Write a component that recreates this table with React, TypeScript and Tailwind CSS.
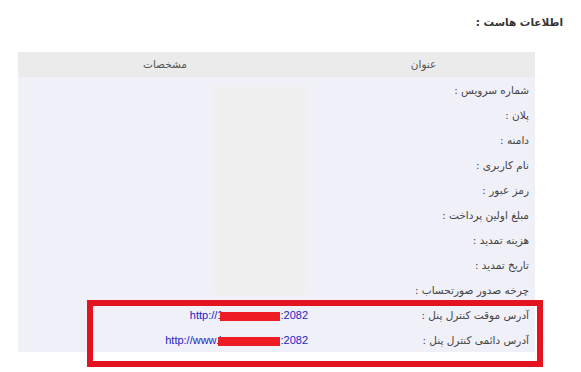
import React from "react";

const labels = [
  "شماره سرویس :",
  "پلان :",
  "دامنه :",
  "نام کاربری :",
  "رمز عبور :",
  "مبلغ اولین پرداخت :",
  "هزینه تمدید :",
  "تاریخ تمدید :",
  "چرخه صدور صورتحساب :",
  "آدرس موقت کنترل پنل :",
  "آدرس دائمی کنترل پنل :",
];

function Link({ prefix, bar }: { prefix: string; bar: number }) {
  return (
    <span dir="ltr" className="text-[#2323c8] whitespace-nowrap font-['Liberation_Sans',sans-serif] text-[11px]">
      {prefix}
      <span
        className="inline-block h-[9px] bg-[#ee1c25] align-middle -ml-[3px]"
        style={{ width: bar }}
      />
      :2082
    </span>
  );
}

export default function App() {
  const values: Record<number, React.ReactNode> = {
    9: <Link prefix="http://1" bar={60} />,
    10: <Link prefix="http://www.l" bar={62} />,
  };

  return (
    <div className="relative w-[581px] h-[372px] bg-white font-['DejaVu_Sans',sans-serif] text-[10.5px] text-[#444]">
      <div dir="rtl" className="h-[44px] flex items-center pr-[18px] pt-[1px] font-bold text-[10.5px] text-[#333]">
        اطلاعات هاست :
      </div>
      <div className="mt-[8px] ml-[18px] w-[517px] relative" dir="rtl">
        <div className="grid grid-cols-[223px_294px] h-[25px] bg-[#ebebeb] text-[#555] items-center">
          <div className="text-center">عنوان</div>
          <div className="text-center">مشخصات</div>
        </div>
        <div className="bg-[#f0f0f9]">
          {labels.map((l, i) => (
            <div key={i} className="grid grid-cols-[223px_294px] h-[25px] items-center">
              <div className="pr-[6px] pt-[2px]">{l}</div>
              <div className="pr-[4px] pt-[2px] text-right">{values[i] ?? null}</div>
            </div>
          ))}
        </div>
        {/* blurred area over the hidden values */}
        <div className="absolute left-[194px] top-[33px] w-[96px] h-[211px] bg-[#f0f0f1] blur-[1px]" />
      </div>
      {/* highlight frame around the panel address rows */}
      <div className="absolute left-[87px] top-[300px] w-[456px] h-[67px] border-[6px] border-[#e3141f]" />
    </div>
  );
}
